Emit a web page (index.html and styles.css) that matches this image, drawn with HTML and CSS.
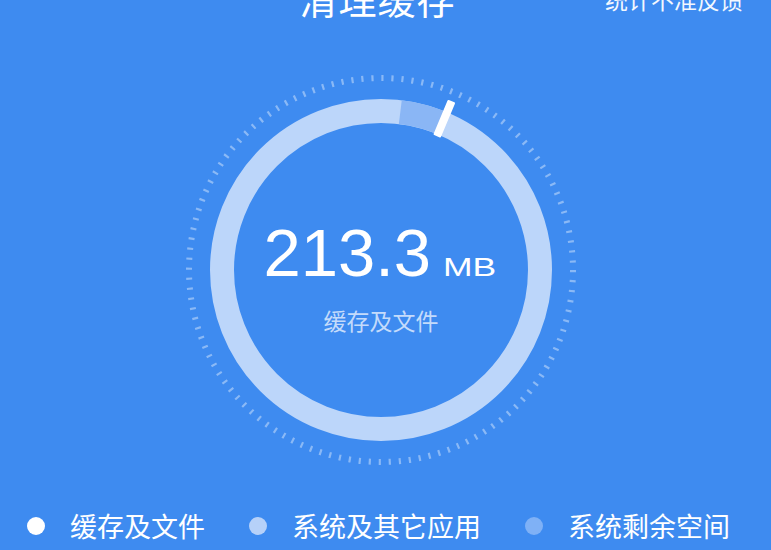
FILE: index.html
```html
<!DOCTYPE html>
<html lang="zh-CN">
<head>
  <meta charset="UTF-8">
  <meta name="viewport" content="width=device-width, initial-scale=1.0">
  <title>清理缓存</title>
  <link rel="stylesheet" href="styles.css">
</head>
<body>

  <div class="page">
    <!-- Top Bar -->
    <header class="top-bar">
      <span></span>
      <h1 class="title">清理缓存</h1>
      <a class="feedback">统计不准反馈</a>
    </header>

    <!-- Storage Ring -->
    <div class="chart">
      <svg class="ring" viewBox="0 0 400 400" width="400" height="400">
        <circle class="ticks" cx="200" cy="200" r="192" />
        <circle class="track" cx="200" cy="200" r="159" />
        <circle class="free" cx="200" cy="200" r="159" transform="rotate(-90 200 200)" />
        <rect class="marker" x="196" y="17" width="8" height="38" rx="1" transform="rotate(22.7 200 200)" />
      </svg>
      <div class="chart-center">
        <div class="size">213.3<span class="unit">MB</span></div>
        <div class="size-label">缓存及文件</div>
      </div>
    </div>

    <!-- Legend -->
    <ul class="legend">
      <li class="legend-item"><i class="dot dot-cache"></i>缓存及文件</li>
      <li class="legend-item"><i class="dot dot-system"></i>系统及其它应用</li>
      <li class="legend-item"><i class="dot dot-free"></i>系统剩余空间</li>
    </ul>
  </div>

</body>
</html>
```

FILE: styles.css
```css
/* General Styles */
body {
  margin: 0;
  background-color: #3e8bf0;
  font-family: "Noto Sans CJK SC", "Noto Sans", sans-serif;
  color: #ffffff;
  overflow: hidden;
}

.page {
  display: flex;
  flex-direction: column;
  height: 550px;
}

/* Top Bar */
.top-bar {
  display: grid;
  grid-template-columns: 1fr auto 1fr;
  align-items: start;
  margin-top: -21px;
  padding-right: 28px;
}

.title {
  margin: 0 0 0 12px;
  font-size: 38px;
  font-weight: 400;
  line-height: 1;
  letter-spacing: 1px;
}

.feedback {
  justify-self: end;
  margin-top: 9px;
  font-size: 23px;
  line-height: 1;
  color: #f2f7fe;
}

/* Storage Ring */
.chart {
  position: relative;
  align-self: center;
  flex-shrink: 0;
  width: 400px;
  height: 400px;
  margin: 53px 9px 0 0;
}

.ring {
  display: block;
}

.ticks {
  fill: none;
  stroke: #9dc4f8;
  stroke-width: 6;
  stroke-dasharray: 2.2 7.853;
  opacity: 0.8;
}

.track {
  fill: none;
  stroke: #bcd6fa;
  stroke-width: 24;
}

.free {
  fill: none;
  stroke: #8ab6f5;
  stroke-width: 24;
  stroke-dasharray: 43.6 999;
  stroke-dashoffset: -19.4;
}

.marker {
  fill: #ffffff;
}

.chart-center {
  position: absolute;
  inset: 0;
  display: flex;
  flex-direction: column;
  align-items: center;
  justify-content: center;
  padding-top: 11px;
}

.size {
  font-family: "Liberation Sans", Arial, sans-serif;
  font-size: 67px;
  line-height: 1;
  white-space: nowrap;
  margin-right: 1px;
}

.unit {
  display: inline-block;
  font-size: 25px;
  margin-left: 12px;
  margin-right: 17px;
  transform: scaleX(1.42);
  transform-origin: left bottom;
}

.size-label {
  margin-top: 23px;
  font-size: 23px;
  line-height: 1;
  color: #c4dbfb;
}

/* Legend */
.legend {
  display: flex;
  align-items: center;
  margin: 36px 0 0;
  padding: 0 0 0 27px;
  list-style: none;
}

.legend-item {
  display: flex;
  flex-shrink: 0;
  align-items: center;
  gap: 25px;
  margin-right: 44px;
  font-size: 27px;
  line-height: 40px;
  white-space: nowrap;
}

.dot {
  flex-shrink: 0;
  width: 18px;
  height: 18px;
  border-radius: 50%;
}

.dot-cache {
  background: #ffffff;
}

.dot-system {
  background: #b6d1f9;
}

.dot-free {
  background: #7fb1f6;
}
```
